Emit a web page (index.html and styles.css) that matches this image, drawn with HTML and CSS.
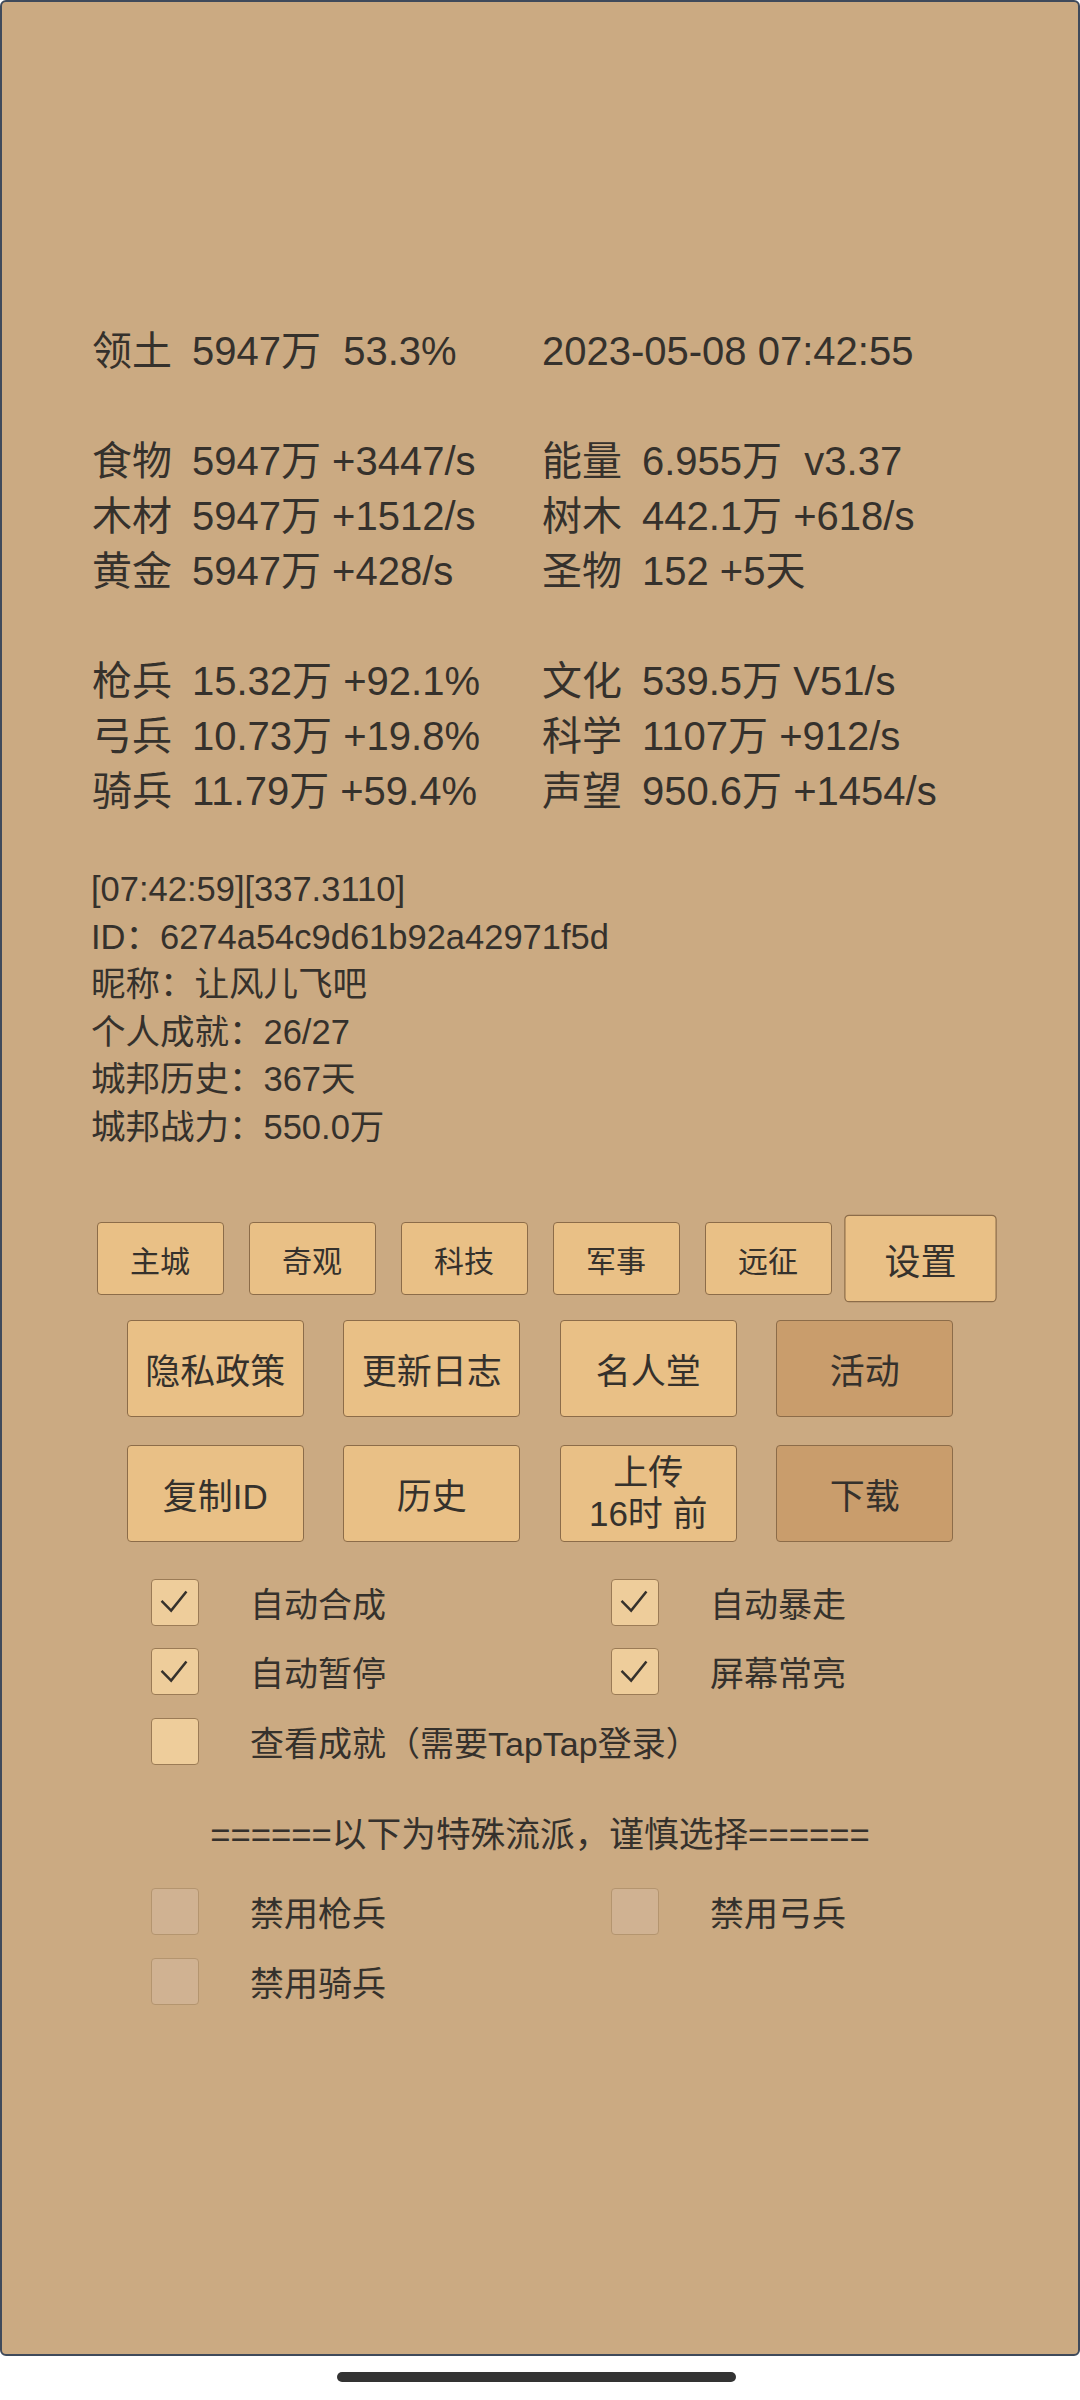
FILE: index.html
```html
<!DOCTYPE html>
<html lang="zh-CN">
<head>
    <meta charset="UTF-8">
    <meta name="viewport" content="width=device-width, initial-scale=1.0">
    <title>城邦</title>
    <link rel="stylesheet" href="styles.css">
</head>
<body>
    <div class="screen">
        <div class="stats">
            <div class="cell"><span class="lbl">领土</span>5947万  53.3%</div>
            <div class="cell">2023-05-08 07:42:55</div>
            <div class="spacer"></div>

            <div class="cell"><span class="lbl">食物</span>5947万 +3447/s</div>
            <div class="cell"><span class="lbl">能量</span>6.955万  v3.37</div>
            <div class="cell"><span class="lbl">木材</span>5947万 +1512/s</div>
            <div class="cell"><span class="lbl">树木</span>442.1万 +618/s</div>
            <div class="cell"><span class="lbl">黄金</span>5947万 +428/s</div>
            <div class="cell"><span class="lbl">圣物</span>152 +5天</div>
            <div class="spacer"></div>

            <div class="cell"><span class="lbl">枪兵</span>15.32万 +92.1%</div>
            <div class="cell"><span class="lbl">文化</span>539.5万 V51/s</div>
            <div class="cell"><span class="lbl">弓兵</span>10.73万 +19.8%</div>
            <div class="cell"><span class="lbl">科学</span>1107万 +912/s</div>
            <div class="cell"><span class="lbl">骑兵</span>11.79万 +59.4%</div>
            <div class="cell"><span class="lbl">声望</span>950.6万 +1454/s</div>
        </div>

        <div class="info">
            <p>[07:42:59][337.3110]</p>
            <p>ID：6274a54c9d61b92a42971f5d</p>
            <p>昵称：让风儿飞吧</p>
            <p>个人成就：26/27</p>
            <p>城邦历史：367天</p>
            <p>城邦战力：550.0万</p>
        </div>

        <div class="tabs">
            <button class="btn tab">主城</button>
            <button class="btn tab">奇观</button>
            <button class="btn tab">科技</button>
            <button class="btn tab">军事</button>
            <button class="btn tab">远征</button>
            <button class="btn tab raised">设置</button>
        </div>

        <div class="btn-row first">
            <button class="btn">隐私政策</button>
            <button class="btn">更新日志</button>
            <button class="btn">名人堂</button>
            <button class="btn dark">活动</button>
        </div>
        <div class="btn-row second">
            <button class="btn">复制ID</button>
            <button class="btn">历史</button>
            <button class="btn two-line">上传<br>16时 前</button>
            <button class="btn dark">下载</button>
        </div>

        <div class="options">
            <label class="opt"><span class="box on"><svg viewBox="0 0 48 47"><polyline points="11,24 21,34 37,14"/></svg></span>自动合成</label>
            <label class="opt"><span class="box on"><svg viewBox="0 0 48 47"><polyline points="11,24 21,34 37,14"/></svg></span>自动暴走</label>
            <label class="opt"><span class="box on"><svg viewBox="0 0 48 47"><polyline points="11,24 21,34 37,14"/></svg></span>自动暂停</label>
            <label class="opt"><span class="box on"><svg viewBox="0 0 48 47"><polyline points="11,24 21,34 37,14"/></svg></span>屏幕常亮</label>
            <label class="opt wide"><span class="box"></span>查看成就（需要TapTap登录）</label>
        </div>

        <div class="divider">======以下为特殊流派，谨慎选择======</div>

        <div class="options special">
            <label class="opt"><span class="box off"></span>禁用枪兵</label>
            <label class="opt"><span class="box off"></span>禁用弓兵</label>
            <label class="opt"><span class="box off"></span>禁用骑兵</label>
        </div>
    </div>

    <div class="home-bar"></div>
</body>
</html>
```

FILE: styles.css
```css
body {
    margin: 0;
    padding: 0;
    background-color: #fff;
    font-family: "Liberation Sans", "Noto Sans CJK SC", sans-serif;
    color: #35312c;
}
.screen {
    box-sizing: border-box;
    height: 2356px;
    padding-top: 322px;
    background-color: #cbaa82;
    border: 2px solid #3f4a5b;
    border-radius: 6px;
}

/* resource table */
.stats {
    display: grid;
    grid-template-columns: 450px auto;
    grid-auto-rows: 55px;
    padding-left: 90px;
    font-size: 40px;
    line-height: 55px;
    white-space: pre;
}
.spacer {
    grid-column: 1 / 3;
}
.lbl {
    display: inline-block;
    width: 100px;
}

.info {
    margin-top: 47px;
    padding-left: 89px;
    font-size: 34.5px;
    line-height: 47.5px;
}
.info p {
    margin: 0;
}

/* buttons */
.btn {
    box-sizing: border-box;
    width: 177px;
    height: 97px;
    padding: 0;
    font-family: inherit;
    font-size: 35px;
    color: #35312c;
    background-color: #e9c086;
    border: 1.5px solid #8c6c49;
    border-radius: 4px;
}
.btn.dark {
    background-color: #c99d6c;
}
.btn.two-line {
    line-height: 41px;
}
.tabs {
    display: flex;
    justify-content: center;
    gap: 25px;
    margin-top: 71px;
}
.btn.tab {
    width: 127px;
    height: 73px;
    font-size: 30px;
}
.btn.raised {
    transform: scale(1.2);
}
.btn-row {
    display: flex;
    justify-content: center;
    gap: 39.5px;
}
.btn-row.first {
    margin-top: 25px;
}
.btn-row.second {
    margin-top: 27.5px;
}

/* toggles */
.options {
    display: grid;
    grid-template-columns: 460px 460px;
    grid-auto-rows: 69.5px;
    margin-top: 26px;
    padding-left: 149px;
    font-size: 34px;
}
.opt {
    display: flex;
    align-items: center;
    gap: 51px;
    white-space: nowrap;
}
.opt.wide {
    grid-column: 1 / 3;
}
.box {
    box-sizing: border-box;
    width: 48px;
    height: 47px;
    flex: none;
    background-color: #eecd9b;
    border: 1.5px solid #9b7b56;
    border-radius: 4px;
}
.box svg {
    display: block;
    width: 100%;
    height: 100%;
    margin: -1.5px;
}
.box polyline {
    fill: none;
    stroke: #35312c;
    stroke-width: 2.6;
}
.box.off {
    background-color: #d0b292;
    border-color: #b4956f;
}
.divider {
    margin-top: 24px;
    text-align: center;
    font-size: 34.7px;
    line-height: 70px;
}
.options.special {
    margin-top: 7px;
}

.home-bar {
    width: 399px;
    height: 10px;
    margin: 16px 0 0 337px;
    background-color: #333;
    border-radius: 5px;
}
```
